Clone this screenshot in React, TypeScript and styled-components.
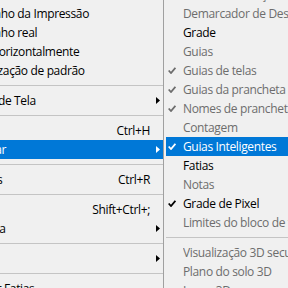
import React from "react";
import styled, { createGlobalStyle } from "styled-components";

const GlobalStyle = createGlobalStyle`
  html, body {
    margin: 0;
    padding: 0;
    background: #f0f0f0;
    overflow: hidden;
  }
  body {
    font-family: "Open Sans", "Noto Sans", sans-serif;
    font-size: 12px;
    letter-spacing: -0.35px;
  }
`;

const Screen = styled.div`
  display: flex;
  align-items: flex-start;
  width: 288px;
  height: 288px;
  overflow: hidden;
  background: #f0f0f0;
`;

const LeftMenu = styled.div`
  flex: none;
  width: 199px;
  margin-left: -36px;
  margin-top: -15px;
  display: flex;
  flex-direction: column;
`;

const SubMenu = styled.div`
  flex: none;
  width: 220px;
  margin-top: -15px;
  padding-left: 2px;
  border-left: 1px solid #a0a0a0;
  display: flex;
  flex-direction: column;
`;

const LeftRow = styled.div<{ $active?: boolean }>`
  display: grid;
  grid-template-columns: minmax(0, 1fr) auto 13px;
  align-items: center;
  height: 19px;
  line-height: 19px;
  white-space: nowrap;
  background: ${(p) => (p.$active ? "#0078d7" : "transparent")};
  color: ${(p) => (p.$active ? "#ffffff" : "#000000")};
`;

const Label = styled.span`
  overflow: hidden;
  min-width: 0;
`;

const Shortcut = styled.span`
  text-align: right;
`;

const ArrowCell = styled.span`
  display: flex;
  align-items: center;
  padding-left: 6px;
`;

const SubRow = styled.div<{ $active?: boolean; $dim?: boolean }>`
  display: grid;
  grid-template-columns: 17px minmax(0, 1fr);
  align-items: center;
  height: 19px;
  line-height: 19px;
  white-space: nowrap;
  background: ${(p) => (p.$active ? "#0078d7" : "transparent")};
  color: ${(p) => (p.$active ? "#ffffff" : p.$dim ? "#6d6d6d" : "#000000")};
`;

const CheckCell = styled.span`
  display: flex;
  align-items: center;
  padding-left: 2px;
`;

const Separator = styled.div`
  height: 1px;
  margin: 5px 0;
  background: #c4c4c4;
`;

const Arrow = () => (
  <svg width="4" height="7" viewBox="0 0 4 7">
    <polygon points="0,0 4,3.5 0,7" fill="currentColor" />
  </svg>
);

const Check = () => (
  <svg width="8" height="7" viewBox="0 0 8 7">
    <path
      d="M0.7 3.5 L3 6 L7.4 0.7"
      fill="none"
      stroke="currentColor"
      strokeWidth="1.8"
    />
  </svg>
);

type LeftItem =
  | { sep: true }
  | { label: string; shortcut?: string; sub?: boolean; active?: boolean };

const leftItems: LeftItem[] = [
  { label: "200%" },
  { label: "Tamanho da Impressão" },
  { label: "Tamanho real" },
  { label: "Virar horizontalmente" },
  { label: "Visualização de padrão" },
  { sep: true },
  { label: "Modo de Tela", sub: true },
  { sep: true },
  { label: "Extras", shortcut: "Ctrl+H" },
  { label: "Mostrar", sub: true, active: true },
  { sep: true },
  { label: "Réguas", shortcut: "Ctrl+R" },
  { sep: true },
  { label: "Aderir", shortcut: "Shift+Ctrl+;" },
  { label: "Aderir a", sub: true },
  { sep: true },
  { label: "Guias", sub: true },
  { sep: true },
  { label: "Limpar Fatias" },
];

type SubItem =
  | { sep: true }
  | { label: string; checked?: boolean; dim?: boolean; active?: boolean };

const subItems: SubItem[] = [
  { label: "Bordas de Seleção", dim: true },
  { label: "Demarcador de Destino", dim: true },
  { label: "Grade" },
  { label: "Guias", dim: true },
  { label: "Guias de telas", checked: true, dim: true },
  { label: "Guias da prancheta", checked: true, dim: true },
  { label: "Nomes de pranchetas", checked: true, dim: true },
  { label: "Contagem", dim: true },
  { label: "Guias Inteligentes", checked: true, active: true },
  { label: "Fatias" },
  { label: "Notas", dim: true },
  { label: "Grade de Pixel", checked: true },
  { label: "Limites do bloco de texto", dim: true },
  { sep: true },
  { label: "Visualização 3D secundária", dim: true },
  { label: "Plano do solo 3D", dim: true },
  { label: "Luzes 3D", dim: true },
];

export default function App() {
  return (
    <>
      <GlobalStyle />
      <Screen>
        <LeftMenu>
          {leftItems.map((it, i) =>
            "sep" in it ? (
              <Separator key={i} />
            ) : (
              <LeftRow key={i} $active={it.active}>
                <Label>{it.label}</Label>
                <Shortcut>{it.shortcut ?? ""}</Shortcut>
                <ArrowCell>{it.sub ? <Arrow /> : null}</ArrowCell>
              </LeftRow>
            )
          )}
        </LeftMenu>
        <SubMenu>
          {subItems.map((it, i) =>
            "sep" in it ? (
              <Separator key={i} />
            ) : (
              <SubRow key={i} $active={it.active} $dim={it.dim}>
                <CheckCell>{it.checked ? <Check /> : null}</CheckCell>
                <Label>{it.label}</Label>
              </SubRow>
            )
          )}
        </SubMenu>
      </Screen>
    </>
  );
}
